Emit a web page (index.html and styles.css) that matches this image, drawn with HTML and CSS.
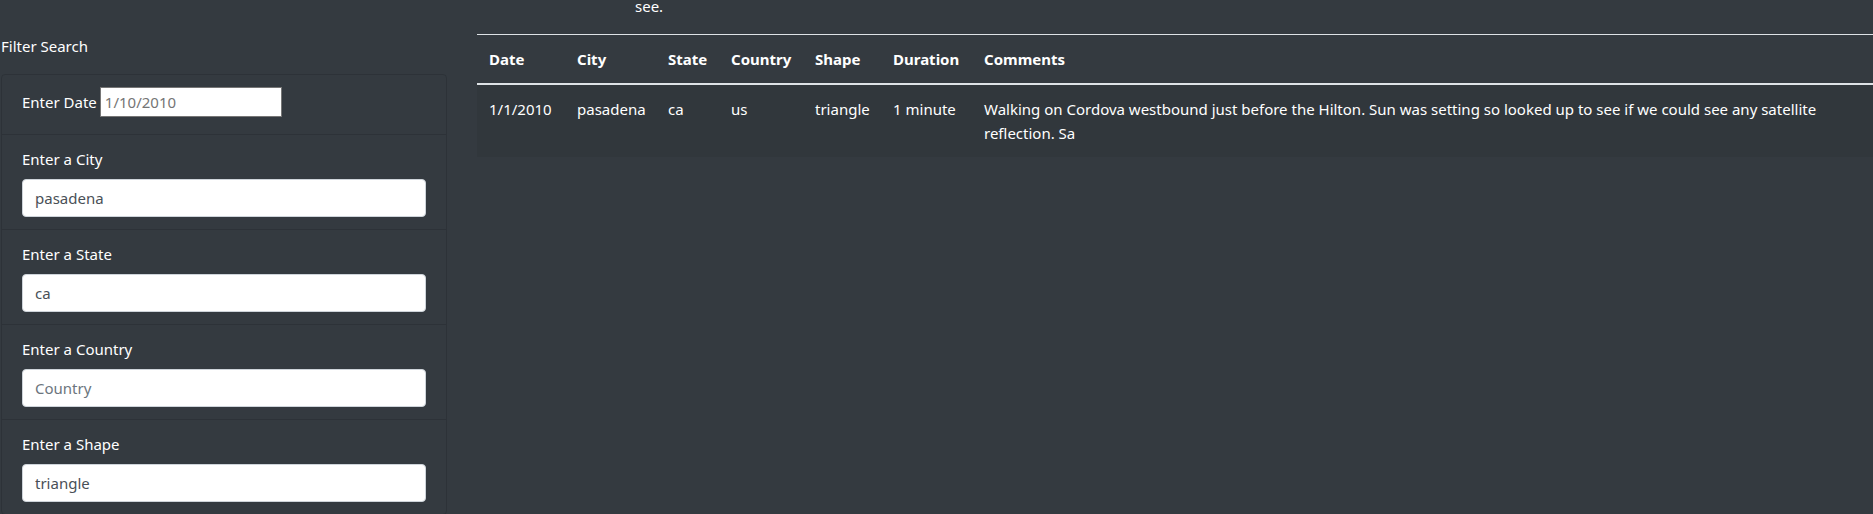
FILE: index.html
```html
<!DOCTYPE html>
<html lang="en">
<head>
<meta charset="utf-8">
<title>Sightings</title>
<link rel="stylesheet" href="styles.css">
</head>
<body>
<p class="intro">see.</p>
<main class="layout">
  <aside class="filters">
    <form>
      <p class="filters-title">Filter Search</p>
      <ul class="filter-list">
        <li class="filter-item filter-inline"><label for="date">Enter Date</label><input class="date-input" id="date" type="text" placeholder="1/10/2010"></li>
        <li class="filter-item"><label for="city">Enter a City</label><input class="form-control" id="city" type="text" value="pasadena"></li>
        <li class="filter-item"><label for="state">Enter a State</label><input class="form-control" id="state" type="text" value="ca"></li>
        <li class="filter-item"><label for="country">Enter a Country</label><input class="form-control" id="country" type="text" placeholder="Country"></li>
        <li class="filter-item"><label for="shape">Enter a Shape</label><input class="form-control" id="shape" type="text" value="triangle"></li>
      </ul>
    </form>
  </aside>
  <section class="results">
    <table class="table">
      <colgroup>
        <col class="col-date"><col class="col-city"><col class="col-state"><col class="col-country"><col class="col-shape"><col class="col-duration"><col>
      </colgroup>
      <thead>
        <tr><th>Date</th><th>City</th><th>State</th><th>Country</th><th>Shape</th><th>Duration</th><th>Comments</th></tr>
      </thead>
      <tbody>
        <tr><td>1/1/2010</td><td>pasadena</td><td>ca</td><td>us</td><td>triangle</td><td>1 minute</td><td>Walking on Cordova westbound just before the Hilton. Sun was setting so looked up to see if we could see any satellite reflection. Sa</td></tr>
      </tbody>
    </table>
  </section>
</main>
</body>
</html>
```
FILE: styles.css
```css
*, *::before, *::after { box-sizing: border-box; }

body {
  margin: 0;
  background: #343a40;
  color: #fff;
  font-family: "Segoe UI", "Noto Sans", sans-serif;
  font-size: 15px;
  line-height: 24px;
  overflow-x: hidden;
}

.intro {
  margin: -6px 0 16px;
  padding-left: 635px;
}

.layout {
  display: flex;
  gap: 30px;
  padding-left: 1px;
}

.filters { flex: 0 0 calc(25% - 22px); }
.filters-title { margin: 0 0 16px; }

.filter-list {
  margin: 0;
  padding: 0;
  list-style: none;
  border: 1px solid rgba(0, 0, 0, .125);
  border-radius: 4px;
}

.filter-item { padding: 12px 20px; }
.filter-item + .filter-item { border-top: 1px solid rgba(0, 0, 0, .125); }
.filter-item label { display: block; margin-bottom: 8px; }

.filter-inline {
  display: flex;
  align-items: flex-start;
  gap: 3px;
  padding-bottom: 17px;
}
.filter-inline label { margin: 3px 0 0; }

input {
  font: inherit;
  background: #fff;
}
input::placeholder { color: #757575; opacity: 1; }

.date-input {
  width: 182px;
  height: 30px;
  padding: 1px 4px;
  border: 1px solid #767676;
}

.form-control {
  display: block;
  width: 100%;
  height: 38px;
  padding: 6px 12px;
  border: 1px solid #ced4da;
  border-radius: 4px;
  color: #495057;
}
.form-control::placeholder { color: #6c757d; }

.results { flex: 1; min-width: 0; }

.table {
  width: 100%;
  border-collapse: collapse;
  table-layout: fixed;
}
.table th, .table td {
  padding: 12px;
  border-top: 1px solid #dee2e6;
  text-align: left;
  vertical-align: top;
}
.table thead th { border-bottom: 2px solid #dee2e6; }
.table tbody tr { background: rgba(0, 0, 0, .05); }

.col-date { width: 88px; }
.col-city { width: 91px; }
.col-state { width: 63px; }
.col-country { width: 84px; }
.col-shape { width: 78px; }
.col-duration { width: 91px; }
```
